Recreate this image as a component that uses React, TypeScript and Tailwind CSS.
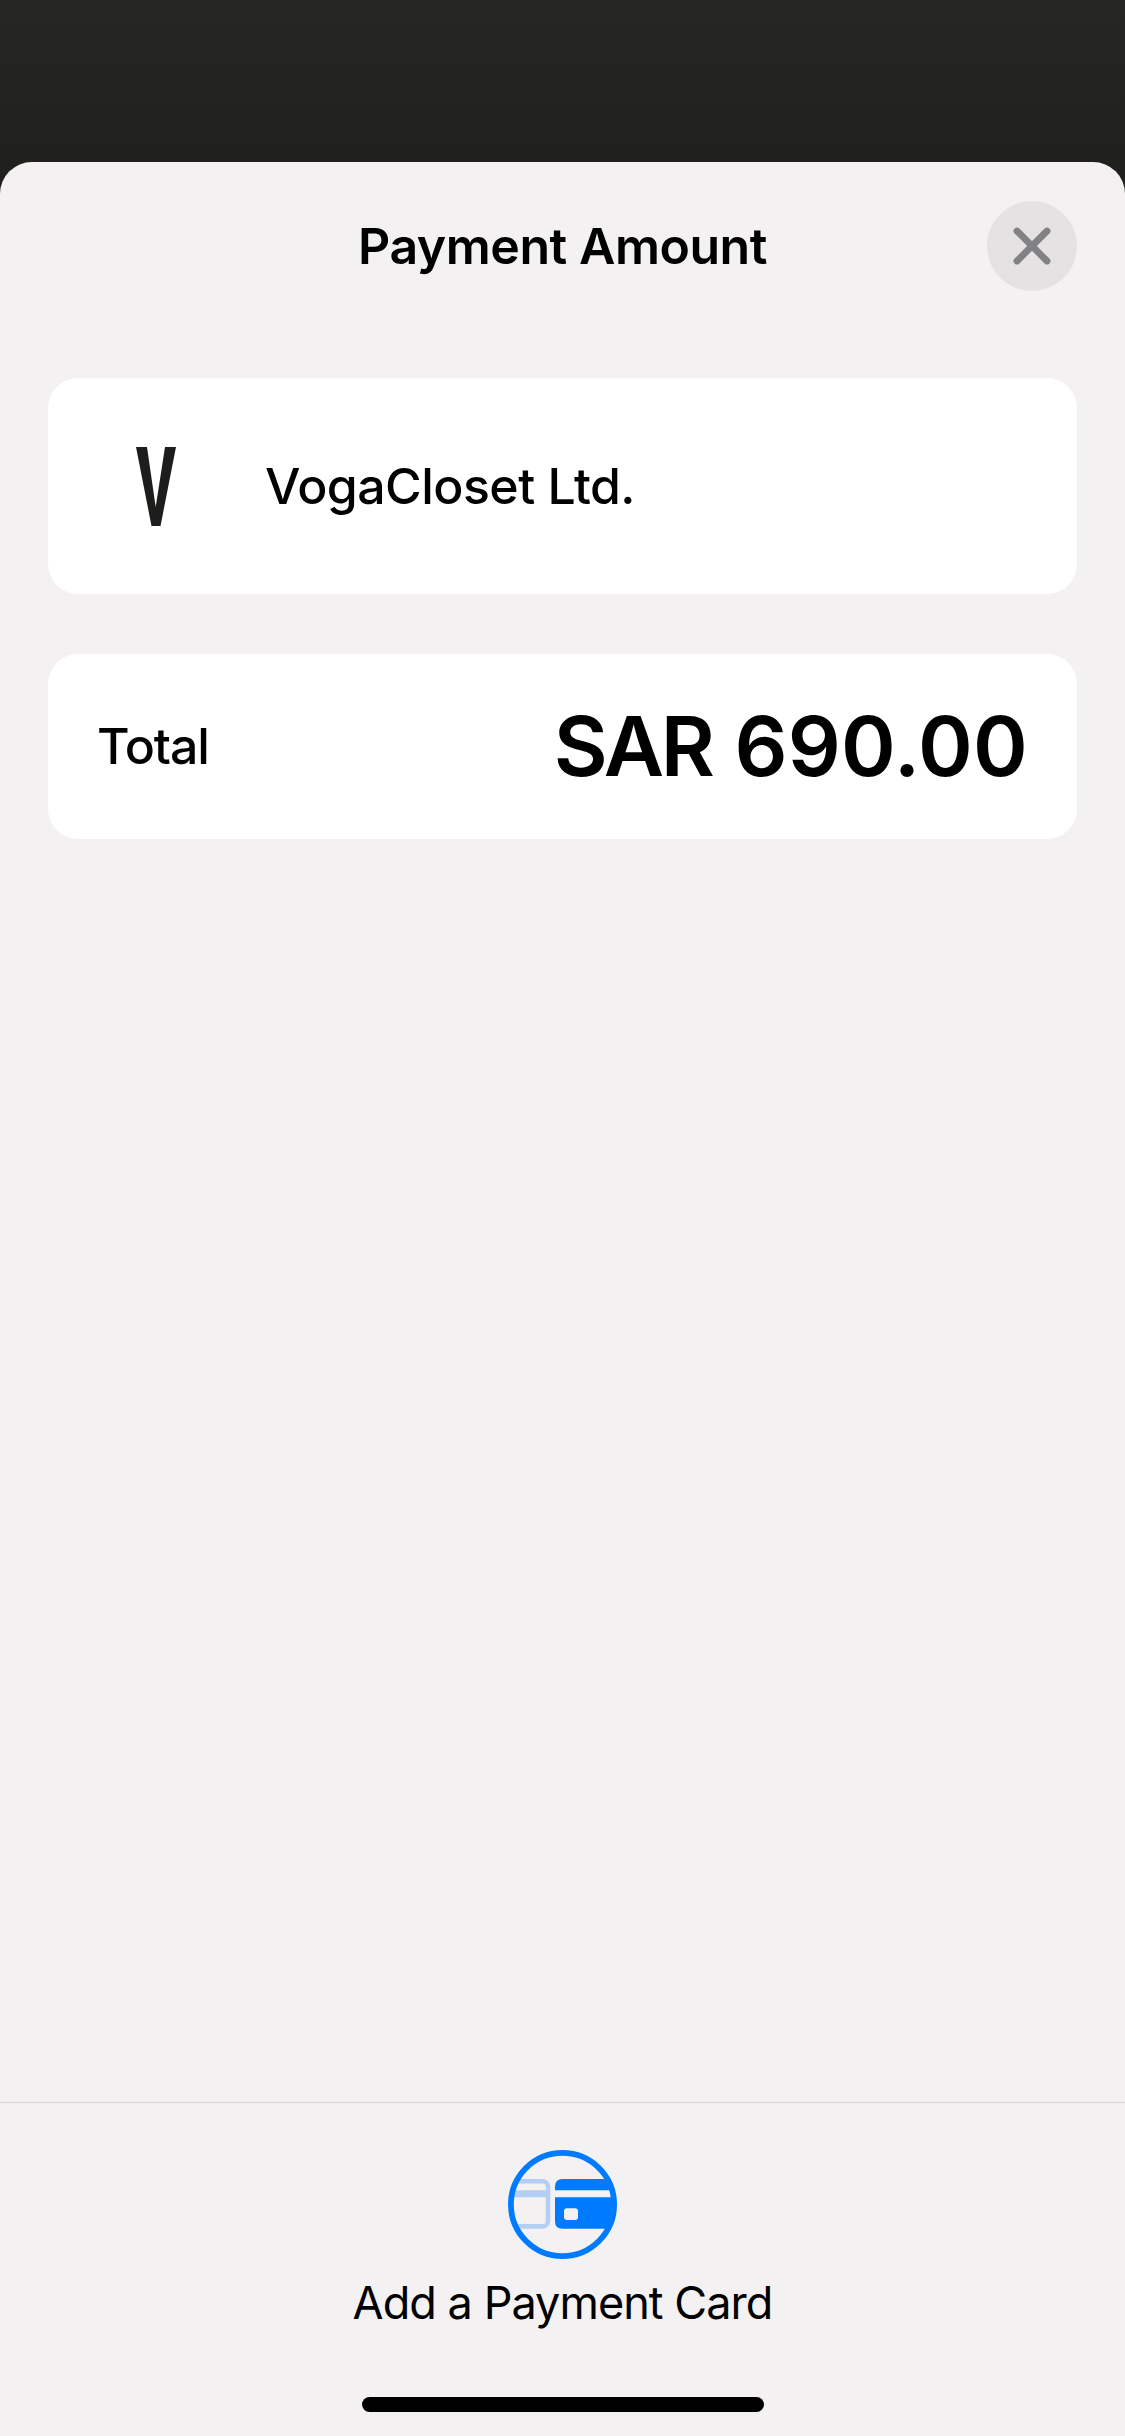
import type { ReactNode } from "react";

function CloseButton() {
  return (
    <button
      aria-label="Close"
      className="flex size-[90px] items-center justify-center rounded-full bg-[#e4e2e3]"
    >
      <svg viewBox="0 0 38 38" className="size-[38px]" fill="none">
        <path d="M4 4 34 34M34 4 4 34" stroke="#828183" strokeWidth="6.8" strokeLinecap="round" />
      </svg>
    </button>
  );
}

function MerchantLogo() {
  return (
    <svg viewBox="0 0 40 79" className="h-[79px] w-10 shrink-0" fill="#1d1d1b">
      <path d="M0 0H11L19.7 60 29 0H40L24.5 79H15.5Z" />
    </svg>
  );
}

function PaymentCardIcon() {
  return (
    <svg viewBox="0 0 109 109" className="size-[109px]" fill="none">
      <defs>
        <clipPath id="ring">
          <circle cx="54.5" cy="54.5" r="50" />
        </clipPath>
      </defs>
      <g clipPath="url(#ring)">
        <rect x="-30" y="31.2" width="70" height="45.2" rx="5.5" stroke="#b3cff4" strokeWidth="4.6" />
        <path d="M0 40.3H40V47.3H0Z" fill="#b3cff4" />
        <path
          d="M47 40.3V36.5Q47 29 54.5 29H109V40.3ZM47 47.3H109V78.7H54.5Q47 78.7 47 71.2Z"
          fill="#007aff"
        />
        <rect x="56" y="58.3" width="14" height="11.7" rx="3" fill="#f3f1f2" />
      </g>
      <circle cx="54.5" cy="54.5" r="51.6" stroke="#007aff" strokeWidth="5.8" />
    </svg>
  );
}

function Card({ className, children }: { className: string; children: ReactNode }) {
  return (
    <section className={`flex items-center rounded-[30px] bg-white ${className}`}>
      {children}
    </section>
  );
}

export default function App() {
  return (
    <div className="h-[2436px] w-[1125px] bg-linear-to-b from-[#262625] to-[#20211c] to-[162px] pt-[162px] font-['Inter',sans-serif] text-black">
      <main className="flex h-[2274px] flex-col rounded-t-[32px] bg-[#f3f1f2]">
        <header className="grid h-[168px] shrink-0 grid-cols-[90px_1fr_90px] items-center px-12">
          <h1 className="col-start-2 text-center text-[50px] leading-[60px] font-semibold tracking-[-0.45px]">
            Payment Amount
          </h1>
          <CloseButton />
        </header>

        <div className="flex grow flex-col gap-[60px] px-12 pt-12">
          <Card className="h-[216px] pl-[88px]">
            <MerchantLogo />
            <span className="ml-[89px] text-[50px] leading-[60px] font-medium tracking-[-0.55px]">
              VogaCloset Ltd.
            </span>
          </Card>
          <Card className="h-[185px] justify-between px-[49px] pb-[2px]">
            <span className="text-[50px] leading-[60px] font-medium tracking-[-1.1px]">Total</span>
            <span className="text-[83px] leading-[100px] font-semibold">
              <span className="pr-[5px] tracking-[-3.2px]">SAR </span>
              <span className="tracking-[0.2px]">690.00</span>
            </span>
          </Card>
        </div>

        <footer className="flex h-[334px] shrink-0 flex-col items-center border-t border-[#d5d3d5] pt-[47px]">
          <PaymentCardIcon />
          <span className="mt-[17px] text-[45px] leading-[54px] tracking-[-0.95px]">Add a Payment Card</span>
          <div className="mt-[67px] h-[15px] w-[402px] rounded-full bg-black" />
        </footer>
      </main>
    </div>
  );
}
